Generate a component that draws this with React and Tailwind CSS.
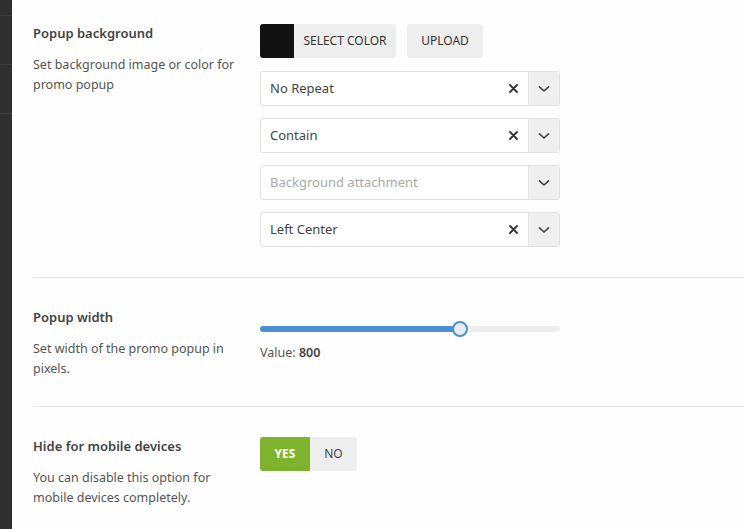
import React from 'react'

const font = { fontFamily: '"Segoe UI", "Noto Sans", "Open Sans", sans-serif' }

function Chevron() {
  return (
    <svg width="12" height="8" viewBox="0 0 12 8" fill="none">
      <path d="M1.5 1.8 L6 6 L10.5 1.8" stroke="#444" strokeWidth="1.6" strokeLinecap="round" strokeLinejoin="round" />
    </svg>
  )
}

function Clear() {
  return (
    <svg width="9" height="9" viewBox="0 0 9 9">
      <path d="M1 1 L8 8 M8 1 L1 8" stroke="#333" strokeWidth="1.8" strokeLinecap="round" />
    </svg>
  )
}

function Select({ value, placeholder }) {
  return (
    <div className="flex h-[35px] w-[300px] rounded-[3px] border border-[#e2e2e2] bg-white">
      <div className="flex flex-1 items-center pl-[9px] pr-[10px]">
        <span className={value ? 'flex-1 text-[13px] text-[#444]' : 'flex-1 text-[13px] text-[#aaa]'}>
          {value || placeholder}
        </span>
        {value && <Clear />}
      </div>
      <div className="flex w-[31px] items-center justify-center rounded-r-[3px] border-l border-[#e6e6e6] bg-[#efefef]">
        <Chevron />
      </div>
    </div>
  )
}

function Section({ title, desc, children, first }) {
  return (
    <div className={first ? 'flex pt-[23px] pb-[30px]' : 'flex border-t border-[#e6e6e6] pt-[29px] pb-[27px]'}>
      <div className="w-[227px] shrink-0">
        <h3 className="text-[13px] font-semibold leading-5 text-[#444]">{title}</h3>
        <p className="mt-[12px] w-[212px] text-[12.5px] leading-5 text-[#555]">{desc}</p>
      </div>
      <div className="w-[300px]">{children}</div>
    </div>
  )
}

export default function App() {
  return (
    <div className="flex min-h-[529px] bg-[#fefefe]" style={font}>
      <div className="flex w-[12px] shrink-0 flex-col bg-[#303030]">
        <div className="mt-[15px] h-px bg-[#3c3c3c]" />
        <div className="mt-[48px] h-px bg-[#3c3c3c]" />
        <div className="mt-[48px] h-px bg-[#3c3c3c]" />
      </div>
      <div className="flex-1 pl-[21px]">
        <Section
          first
          title="Popup background"
          desc="Set background image or color for promo popup"
        >
          <div className="mt-[1px] flex flex-col gap-[12px]">
            <div className="flex h-[35px] gap-[11px]">
              <div className="flex h-[34px] w-[136px] overflow-hidden rounded-[3px] bg-[#eeeeee]">
                <div className="w-[34px] bg-[#121212]" />
                <span className="flex flex-1 items-center justify-center text-[12px] text-[#333]">SELECT COLOR</span>
              </div>
              <div className="flex h-[34px] w-[76px] items-center justify-center rounded-[3px] bg-[#eeeeee] text-[12px] text-[#333]">
                UPLOAD
              </div>
            </div>
            <Select value="No Repeat" />
            <Select value="Contain" />
            <Select placeholder="Background attachment" />
            <Select value="Left Center" />
          </div>
        </Section>
        <Section title="Popup width" desc="Set width of the promo popup in pixels.">
          <div className="pt-[19px]">
            <div className="relative h-[6px] w-[300px] rounded-full bg-[#eeeeee]">
              <div className="h-[6px] w-[200px] rounded-full bg-[#4b90d0]" />
              <div className="absolute left-[192px] top-[-5px] h-[16px] w-[16px] rounded-full border-2 border-[#4b90d0] bg-[#ebebeb]" />
            </div>
            <p className="mt-[12px] text-[12.5px] text-[#555]">
              Value: <span className="font-semibold text-[#444]">800</span>
            </p>
          </div>
        </Section>
        <Section title="Hide for mobile devices" desc="You can disable this option for mobile devices completely.">
          <div className="mt-[1px] flex h-[34px] w-fit overflow-hidden rounded-[3px]">
            <span className="flex w-[50px] items-center justify-center bg-[#7fb32d] text-[12px] font-bold text-white">YES</span>
            <span className="flex w-[47px] items-center justify-center bg-[#eeeeee] text-[12px] text-[#444]">NO</span>
          </div>
        </Section>
      </div>
    </div>
  )
}
